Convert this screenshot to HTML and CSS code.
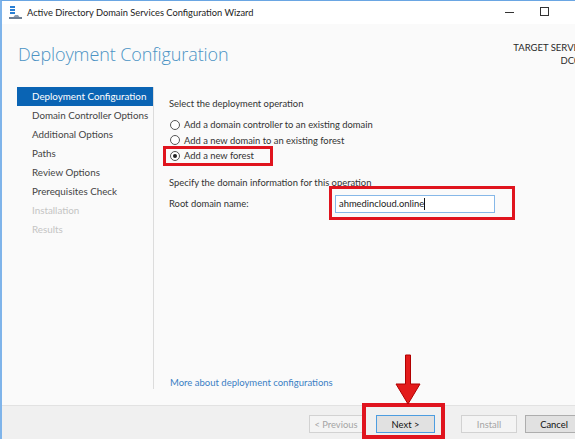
FILE: index.html
```html
<!DOCTYPE html>
<html>
<head>
<meta charset="utf-8">
<link rel="stylesheet" href="styles.css">
</head>
<body>
<div class="window">
  <div class="titlebar">
    <svg class="app-icon" width="13" height="13" viewBox="0 0 13 13">
      <rect x="1" y="0" width="5" height="2" fill="#2a7fd4"/>
      <rect x="1" y="3" width="5" height="2" fill="#2a7fd4"/>
      <rect x="1" y="6" width="5" height="2" fill="#2a7fd4"/>
      <path d="M3 13 L6 9 L9 9 L12 13 Z" fill="#8a9bb0"/>
      <rect x="0" y="11" width="13" height="2" fill="#6d7f95"/>
    </svg>
    <span class="title-text">Active Directory Domain Services Configuration Wizard</span>
    <span class="spacer"></span>
    <span class="ctl ctl-min"></span>
    <span class="ctl ctl-max"></span>
    <span class="ctl ctl-close"></span>
  </div>
  <div class="header">
    <h1 class="page-title">Deployment Configuration</h1>
    <div class="target">
      <div>TARGET SERVER</div>
      <div>DC01</div>
    </div>
  </div>
  <div class="main">
    <ul class="nav">
      <li class="nav-item active">Deployment Configuration</li>
      <li class="nav-item">Domain Controller Options</li>
      <li class="nav-item">Additional Options</li>
      <li class="nav-item">Paths</li>
      <li class="nav-item">Review Options</li>
      <li class="nav-item">Prerequisites Check</li>
      <li class="nav-item disabled">Installation</li>
      <li class="nav-item disabled">Results</li>
    </ul>
    <div class="content">
      <div class="label">Select the deployment operation</div>
      <div class="radios">
        <div class="radio-row"><span class="radio"></span>Add a domain controller to an existing domain</div>
        <div class="radio-row"><span class="radio"></span>Add a new domain to an existing forest</div>
        <div class="radio-row highlight-forest"><span class="radio checked"></span>Add a new forest</div>
      </div>
      <div class="label spec">Specify the domain information for this operation</div>
      <div class="field-row">
        <span class="field-label">Root domain name:</span>
        <span class="input-wrap"><span class="input">ahmedincloud.online<span class="caret"></span></span></span>
      </div>
      <div class="grow"></div>
      <a class="link">More about deployment configurations</a>
    </div>
  </div>
  <div class="footer">
    <span class="btn disabled prev">&lt; Previous</span>
    <span class="btn next">Next &gt;
      <svg class="arrow" width="28" height="52" viewBox="0 0 28 52">
        <path d="M11.5 1 L16.5 1 L16.5 30 L26 30 L14 50 L2 30 L11.5 30 Z" fill="#e31b1b" stroke="#b00000" stroke-width="1"/>
      </svg>
    </span>
    <span class="btn disabled install">Install</span>
    <span class="btn cancel">Cancel</span>
  </div>
</div>
</body>
</html>
```
FILE: styles.css
```css
html, body {
  margin: 0;
  padding: 0;
  width: 575px;
  height: 439px;
  overflow: hidden;
  background: #fff;
}
.window {
  width: 593px;
  height: 439px;
  display: flex;
  flex-direction: column;
  font-family: Lato, "Open Sans", sans-serif;
  font-size: 9.4px;
  color: #333;
  background: #fafafa;
  border-left: 2px solid #7fb4ea;
  border-top: 1px solid #6aa6e3;
  box-sizing: border-box;
}
.titlebar {
  height: 23px;
  flex: none;
  display: flex;
  align-items: center;
  background: #fff;
  padding-left: 7px;
}
.app-icon { flex: none; margin-right: 5px; margin-top: -1px; }
.title-text { font-size: 9.3px; color: #222; }
.spacer { flex: 1; }
.ctl { width: 35px; height: 23px; position: relative; flex: none; }
.ctl-min::after {
  content: ""; position: absolute; left: 13px; top: 11px; width: 9px; height: 1px; background: #333;
}
.ctl-max::after {
  content: ""; position: absolute; left: 13px; top: 6px; width: 7px; height: 7px; border: 1px solid #333;
}
.ctl-close { width: 31px; }
.header {
  height: 63px;
  flex: none;
  display: flex;
  justify-content: space-between;
  padding: 0 8px 0 16px;
}
.page-title {
  margin: 18px 0 0 0;
  font-family: "Open Sans", sans-serif;
  font-size: 18px;
  font-weight: 300;
  color: #4b93c4;
  letter-spacing: -0.1px;
}
.target {
  margin-top: 17px;
  text-align: right;
  font-size: 9.5px;
  line-height: 13px;
  color: #2a2a2a;
}
.main {
  flex: 1;
  display: flex;
  padding-bottom: 16px;
}
.nav {
  list-style: none;
  margin: 0;
  padding: 0 0 0 15px;
  width: 136px;
  flex: none;
  border-right: 1px solid #dcdcdc;
}
.nav-item {
  height: 19px;
  line-height: 18px;
  padding-left: 15px;
  font-size: 9.8px;
  color: #444;
  white-space: nowrap;
}
.nav-item.active { background: #0a64b4; color: #fff; }
.nav-item.disabled { color: #c4c4c4; }
.content {
  flex: 1;
  display: flex;
  flex-direction: column;
  padding: 10px 0 0 15px;
}
.label { line-height: 14px; color: #333; }
.radios { margin-top: 6px; display: flex; flex-direction: column; }
.radio-row {
  display: flex;
  align-items: center;
  height: 15.5px;
  position: relative;
  white-space: nowrap;
}
.radio {
  width: 10px; height: 10px;
  border: 1px solid #555;
  border-radius: 50%;
  background: #fff;
  margin: 0 4px 0 1px;
  box-sizing: border-box;
  position: relative;
}
.radio.checked::after {
  content: ""; position: absolute; left: 2px; top: 2px; width: 4px; height: 4px; border-radius: 50%; background: #222;
}
.highlight-forest::after {
  content: "";
  position: absolute;
  left: -6px; top: -2px;
  width: 104px; height: 14px;
  border: 3px solid #e0141e;
}
.spec { margin-top: 12px; }
.field-row {
  display: flex;
  align-items: center;
  margin-top: 5px;
}
.field-label { width: 166px; flex: none; }
.input-wrap {
  position: relative;
  display: inline-block;
}
.input-wrap::before {
  content: "";
  position: absolute;
  left: -6px; top: -9px;
  width: 180px; height: 28px;
  border: 3px solid #e0141e;
}
.input {
  display: flex;
  align-items: center;
  width: 155px;
  height: 16px;
  border: 1px solid #86b8e8;
  background: #fff;
  padding-left: 3px;
  color: #222;
  position: relative;
}
.caret { width: 1px; height: 12px; background: #111; }
.grow { flex: 1; }
.link {
  color: #3a7fc4;
  font-size: 9.5px;
  line-height: 14px;
  margin-bottom: -1px;
  margin-left: 1px;
}
.footer {
  height: 34px;
  flex: none;
  background: #f0f0f0;
  border-top: 1px solid #e2e2e2;
  box-sizing: border-box;
  display: flex;
  align-items: flex-start;
  padding: 9px 0 0 307px;
}
.btn {
  box-sizing: border-box;
  width: 56px;
  height: 18px;
  border: 1px solid #adadad;
  background: #e1e1e1;
  display: flex;
  align-items: center;
  justify-content: center;
  color: #111;
  position: relative;
  flex: none;
}
.btn.disabled { background: #f4f4f4; border-color: #d2d2d2; color: #a4a4a4; }
.btn.prev { width: 54px; }
.btn.next {
  margin-left: 13px;
  width: 59px;
  border-color: #4d9de0;
}
.btn.next::before {
  content: "";
  position: absolute;
  left: -15px; top: -13px;
  width: 75px; height: 28px;
  border: 4px solid #e0141e;
}
.arrow { position: absolute; left: 17px; top: -62px; }
.btn.install { margin-left: 26px; }
.btn.cancel { margin-left: 8px; width: 58px; }
```
